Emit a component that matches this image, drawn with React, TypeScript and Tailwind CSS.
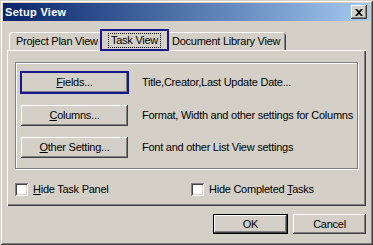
import React from 'react';

const raised =
  'shadow-[inset_-1px_-1px_#404040,inset_1px_1px_#ffffff,inset_-2px_-2px_#808080,inset_2px_2px_#d4d0c8]';
const sunken =
  'shadow-[inset_1px_1px_#808080,inset_-1px_-1px_#ffffff,inset_2px_2px_#404040,inset_-2px_-2px_#d4d0c8]';

function Btn({ label, u, focused }: { label: string; u: string; focused?: boolean }) {
  const rest = label.slice(u.length);
  const text = (
    <span>
      <span className="underline underline-offset-1">{u}</span>
      {rest}
    </span>
  );
  if (focused) {
    return (
      <div className="w-[109px] h-[23px] border-2 border-[#16168f] flex">
        <div className="flex-1 flex items-center justify-center shadow-[inset_-1px_-1px_#808080]">{text}</div>
      </div>
    );
  }
  return (
    <div className={`w-[107px] h-[21px] mx-[1px] flex items-center justify-center ${raised}`}>{text}</div>
  );
}

function Check({ children }: { children: React.ReactNode }) {
  return (
    <div className="flex items-center gap-[5px]">
      <div className={`w-[13px] h-[13px] bg-white ${sunken}`} />
      <span>{children}</span>
    </div>
  );
}

export default function App() {
  const rows = [
    { label: 'Fields...', u: 'F', desc: 'Title,Creator,Last Update Date...', focused: true },
    { label: 'Columns...', u: 'C', desc: 'Format, Width and other settings for Columns' },
    { label: 'Other Setting...', u: 'O', desc: 'Font and other List View settings' },
  ];

  return (
    <div
      className="w-[373px] h-[245px] bg-[#d4d0c8] p-[3px] flex flex-col text-[11px] tracking-[-0.25px] text-black shadow-[inset_1px_1px_#d4d0c8,inset_-1px_-1px_#404040,inset_2px_2px_#ffffff,inset_-2px_-2px_#808080]"
      style={{ fontFamily: '"Liberation Sans", Arial, sans-serif' }}
    >
      {/* Title bar */}
      <div className="h-[18px] flex items-center justify-between pl-[2px] pr-[3px] bg-gradient-to-r from-[#0a246a] to-[#a6caf0]">
        <span className="text-white font-bold tracking-[0.3px]">Setup View</span>
        <div className={`w-[16px] h-[14px] bg-[#d4d0c8] flex items-center justify-center ${raised}`}>
          <svg width="8" height="7" viewBox="0 0 8 7">
            <path d="M0 0h2l2 2 2-2h2L5 3.5 8 7H6L4 5 2 7H0l3-3.5z" fill="#000" />
          </svg>
        </div>
      </div>

      {/* Body */}
      <div className="flex-1 flex flex-col px-[4px] pt-[8px]">
        {/* Tabs */}
        <div className="h-[21px] flex items-end pl-[2px]">
          <div className="w-[91px] h-[18px] pl-[7px] flex items-center rounded-tl-[3px] shadow-[inset_1px_1px_#ffffff]">
            Project Plan View
          </div>
          <div className="w-[69px] h-[22px] -mb-[1px] relative z-10 bg-[#d4d0c8] border-2 border-[#16168f] flex items-center justify-center">
            <span className="border border-dotted border-black px-[2px] leading-[13px]">Task View</span>
          </div>
          <div className="w-[117px] h-[18px] pl-[3px] flex items-center rounded-tr-[3px] shadow-[inset_0_1px_#ffffff,inset_-1px_0_#404040,inset_-2px_0_#808080]">
            Document Library View
          </div>
        </div>

        {/* Panel */}
        <div className="h-[156px] flex flex-col shadow-[inset_1px_1px_#ffffff,inset_-1px_-1px_#404040,inset_-2px_-2px_#808080]">
          <div className="mt-[12px] mx-[8px] h-[107px] border border-[#808080] shadow-[1px_1px_#ffffff,inset_1px_1px_#ffffff] pl-[4px] pt-[8px] flex flex-col gap-[11px]">
            {rows.map((r, i) => (
              <div key={r.label} className={`flex items-center gap-[13px] ${i === 0 ? 'h-[23px]' : 'h-[21px]'}`}>
                <Btn label={r.label} u={r.u} focused={r.focused} />
                <span>{r.desc}</span>
              </div>
            ))}
          </div>
          <div className="mt-[12px] flex pl-[8px]">
            <div className="w-[176px]">
              <Check>
                <span className="underline underline-offset-1">H</span>ide Task Panel
              </Check>
            </div>
            <Check>
              Hide Completed <span className="underline underline-offset-1">T</span>asks
            </Check>
          </div>
        </div>

        {/* Footer buttons */}
        <div className="flex justify-end gap-[5px] mt-[8px]">
          <div className="w-[75px] h-[20px] border border-black flex">
            <div className="flex-1 flex items-center justify-center shadow-[inset_-1px_-1px_#404040,inset_1px_1px_#ffffff,inset_-2px_-2px_#808080]">
              OK
            </div>
          </div>
          <div className={`w-[73px] h-[20px] flex items-center justify-center ${raised}`}>Cancel</div>
        </div>
      </div>
    </div>
  );
}
